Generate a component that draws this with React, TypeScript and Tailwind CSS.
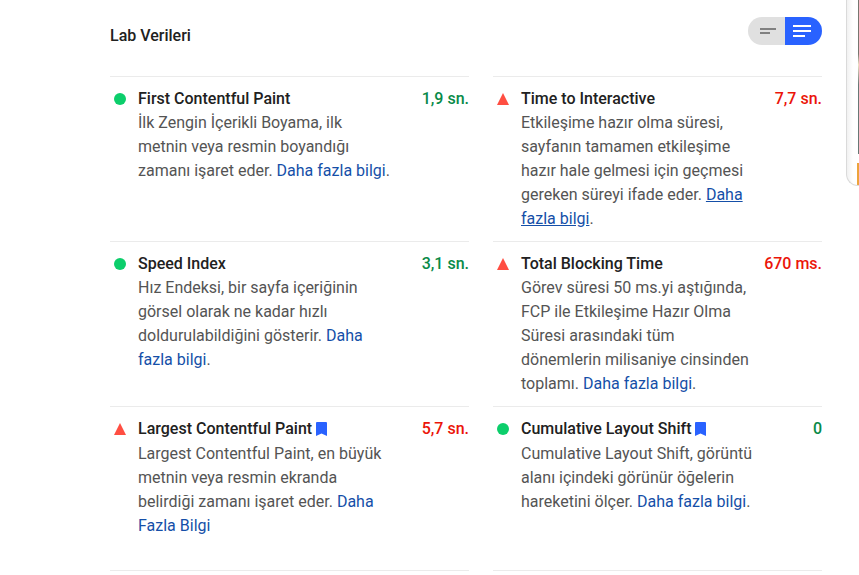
import type { ReactNode } from "react";

type Status = "good" | "poor";

interface Metric {
  title: string;
  value: string;
  status: Status;
  vital?: boolean;
  underlined?: boolean;
  description: string;
  link: string;
  end: string;
}

const metrics: Metric[] = [
  {
    title: "First Contentful Paint",
    value: "1,9 sn.",
    status: "good",
    description: "İlk Zengin İçerikli Boyama, ilk metnin veya resmin boyandığı zamanı işaret eder.",
    link: "Daha fazla bilgi",
    end: ".",
  },
  {
    title: "Time to Interactive",
    value: "7,7 sn.",
    status: "poor",
    underlined: true,
    description:
      "Etkileşime hazır olma süresi, sayfanın tamamen etkileşime hazır hale gelmesi için geçmesi gereken süreyi ifade eder.",
    link: "Daha fazla bilgi",
    end: ".",
  },
  {
    title: "Speed Index",
    value: "3,1 sn.",
    status: "good",
    description: "Hız Endeksi, bir sayfa içeriğinin görsel olarak ne kadar hızlı doldurulabildiğini gösterir.",
    link: "Daha fazla bilgi",
    end: ".",
  },
  {
    title: "Total Blocking Time",
    value: "670 ms.",
    status: "poor",
    description:
      "Görev süresi 50 ms.yi aştığında, FCP ile Etkileşime Hazır Olma Süresi arasındaki tüm dönemlerin milisaniye cinsinden toplamı.",
    link: "Daha fazla bilgi",
    end: ".",
  },
  {
    title: "Largest Contentful Paint",
    value: "5,7 sn.",
    status: "poor",
    vital: true,
    description: "Largest Contentful Paint, en büyük metnin veya resmin ekranda belirdiği zamanı işaret eder.",
    link: "Daha Fazla Bilgi",
    end: "",
  },
  {
    title: "Cumulative Layout Shift",
    value: "0",
    status: "good",
    vital: true,
    description: "Cumulative Layout Shift, görüntü alanı içindeki görünür öğelerin hareketini ölçer.",
    link: "Daha fazla bilgi",
    end: ".",
  },
];

function StatusIcon({ status }: { status: Status }) {
  return (
    <svg viewBox="0 0 12 12" className="mx-1 mt-1.5 size-3 shrink-0" aria-hidden="true">
      {status === "good" ? <circle cx="6" cy="6" r="6" fill="#0cce6b" /> : <path d="M6 0L12 12H0z" fill="#ff4e42" />}
    </svg>
  );
}

function Bookmark() {
  return (
    <svg viewBox="0 0 11 14" className="h-3.5 w-[11px] shrink-0" aria-hidden="true">
      <path d="M1 0H10Q11 0 11 1V14L5.5 11.5L0 14V1Q0 0 1 0z" fill="#2962ff" />
    </svg>
  );
}

function MetricItem({ metric }: { metric: Metric }) {
  return (
    <li className="flex min-h-[164px] border-t border-[#ebebeb] py-2.5">
      <StatusIcon status={metric.status} />
      <div className="ml-2 min-w-0 flex-1">
        <div className={`flex justify-between ${metric.vital ? "pb-px" : ""}`}>
          <h3 className="flex items-center gap-1 font-medium text-[#212121]">
            {metric.title}
            {metric.vital && <Bookmark />}
          </h3>
          <span
            className={`font-medium whitespace-nowrap ${
              metric.status === "good" ? "text-[#088a48]" : "text-[#eb1509]"
            }`}
          >
            {metric.value}
          </span>
        </div>
        <p className="w-[77%] text-[#545454]">
          {metric.description}{" "}
          <a href="#bilgi" className={`text-[#154fa8] ${metric.underlined ? "underline" : ""}`}>
            {metric.link}
          </a>
          {metric.end}
        </p>
      </div>
    </li>
  );
}

function ToggleButton({ label, className, children }: { label: string; className: string; children: ReactNode }) {
  return (
    <button type="button" aria-label={label} className={`flex h-7 w-[37px] items-center justify-center ${className}`}>
      {children}
    </button>
  );
}

export default function App() {
  return (
    <div className="flex items-start overflow-hidden bg-white font-[Roboto,sans-serif] text-base leading-6">
      <main className="min-w-0 flex-1 pl-[110px]">
        <header className="flex h-[76px] items-start justify-between pt-[17px]">
          <h2 className="mt-[7px] font-medium text-[#212121]">Lab Verileri</h2>
          <div className="flex overflow-hidden rounded-full">
            <ToggleButton label="Kısa görünüm" className="bg-[#e0e0e0] pl-[3px]">
              <svg viewBox="0 0 24 24" className="size-6" fill="#808080">
                <path d="M4 9h16v2H4zM4 13h10v2H4z" />
              </svg>
            </ToggleButton>
            <ToggleButton label="Ayrıntılı görünüm" className="bg-[#2962ff] pr-[3px]">
              <svg viewBox="0 0 24 24" className="size-6" fill="#fff">
                <path d="M3 6h18v2H3zM3 11h18v2H3zM3 16h12v2H3z" />
              </svg>
            </ToggleButton>
          </div>
        </header>
        <ul className="grid grid-cols-[359fr_329fr] gap-x-6">
          {metrics.map((metric) => (
            <MetricItem key={metric.title} metric={metric} />
          ))}
        </ul>
        <div className="grid grid-cols-[359fr_329fr] gap-x-6">
          <div className="border-t border-[#ebebeb]" />
          <div className="border-t border-[#ebebeb]" />
        </div>
      </main>
      <aside className="ml-6 h-[186px] w-[13px] shrink-0 overflow-hidden rounded-bl-xl border-b border-l border-[#dadada] bg-linear-to-r from-[#f1f1f1] to-white to-50%">
        <div className="flex h-full flex-col items-end justify-between">
          <div className="h-[154px] w-px bg-linear-to-b from-[#77766f] from-35% via-[#efe0c5] via-42% to-[#687875] to-55%" />
          <div className="h-[22px] w-0.5 bg-[#eda33b]" />
        </div>
      </aside>
    </div>
  );
}
